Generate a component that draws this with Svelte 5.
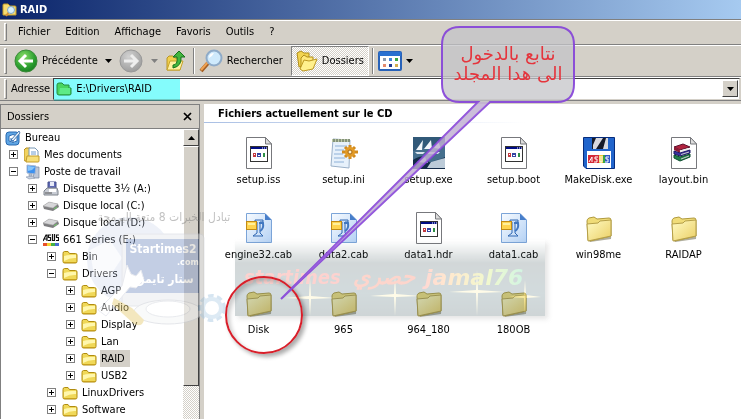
<script lang="ts">
	const menus = ["Fichier", "Edition", "Affichage", "Favoris", "Outils", "?"];

	type TreeNode = { name: string; level: number; icon: string; open?: boolean; };

	const tree: TreeNode[] = [
		{ name: "Mes documents", level: 1, icon: "documents" },
		{ name: "Poste de travail", level: 1, icon: "computer", open: true },
		{ name: "Disquette 3½ (A:)", level: 2, icon: "floppy" },
		{ name: "Disque local (C:)", level: 2, icon: "drive" },
		{ name: "Disque local (D:)", level: 2, icon: "drive" },
		{ name: "661 Series (E:)", level: 2, icon: "asus", open: true },
		{ name: "Bin", level: 3, icon: "folder" },
		{ name: "Drivers", level: 3, icon: "folder", open: true },
		{ name: "AGP", level: 4, icon: "folder" },
		{ name: "Audio", level: 4, icon: "folder" },
		{ name: "Display", level: 4, icon: "folder" },
		{ name: "Lan", level: 4, icon: "folder" },
		{ name: "RAID", level: 4, icon: "folder" },
		{ name: "USB2", level: 4, icon: "folder" },
		{ name: "LinuxDrivers", level: 3, icon: "folder" },
		{ name: "Software", level: 3, icon: "folder" }
	];

	const files = [
		{ name: "setup.iss", icon: "app" },
		{ name: "setup.ini", icon: "ini" },
		{ name: "setup.exe", icon: "installer" },
		{ name: "setup.boot", icon: "app" },
		{ name: "MakeDisk.exe", icon: "disk" },
		{ name: "layout.bin", icon: "rar" },
		{ name: "engine32.cab", icon: "cab" },
		{ name: "data2.cab", icon: "cab" },
		{ name: "data1.hdr", icon: "app" },
		{ name: "data1.cab", icon: "cab" },
		{ name: "win98me", icon: "dir" },
		{ name: "RAIDAP", icon: "dir" },
		{ name: "Disk", icon: "dir" },
		{ name: "965", icon: "dir" },
		{ name: "964_180", icon: "dir" },
		{ name: "180OB", icon: "dir" }
	];

	let selected = $state("RAID");
	let address = $state("E:\\Drivers\\RAID");
	let showFolders = $state(true);
</script>

{#snippet caret()}
	<svg class="caret" width="7" height="4" viewBox="0 0 7 4"><path d="M0 0h7L3.500 4z" fill="currentColor" /></svg>
{/snippet}

{#snippet smallIcon(kind: string)}
	<svg width="16" height="16" viewBox="0 0 16 16">
		{#if kind === "folder"}
			<path d="M1 4.500Q1 2.500 2.500 2.500H6L7.500 4.500H13.500Q15 4.500 15 6V12.500Q15 14 13.500 14H2.500Q1 14 1 12.500z" fill="#f0d858" stroke="#b08c10" />
			<path d="M2 7Q5 5.500 14 6V9Q8 8.500 2 12z" fill="#fff7ad" />
			<path d="M2 13.500H14" stroke="#c9a11d" />
		{:else if kind === "green"}
			<path d="M1 4Q1 2 3 2H6L8 4H13V7H15V13Q15 14 13 14H3Q1 14 1 12z" fill="#8ad860" stroke="#3f9040" />
			<path d="M3 13L4 7H14V13z" fill="#b4ee88" />
		{:else if kind === "search"}
			<path d="M1 3Q1 2 2 2H6L8 4H13Q14 4 14 5V13H1z" fill="#f6dc72" stroke="#c39d28" />
			<path d="M7 10L4 14" stroke="#d99236" stroke-width="2" />
			<circle cx="9" cy="8" r="3.500" fill="#d8f0fc" stroke="#7fa7c4" />
		{:else if kind === "desktop"}
			<rect x="1" y="2" width="13" height="13" rx="3" fill="#5ea5e4" stroke="#2868b0" />
			<path d="M4 6Q8 3 12 6V11Q8 14 4 11z" fill="#fff" stroke="#2868b0" />
			<path d="M6 10L14 1L15 3L8 11z" fill="#e9f2fb" stroke="#285f9f" stroke-width=".8" />
			<path d="M6 8v3h3" fill="none" stroke="#2c70ba" />
		{:else if kind === "documents"}
			<path d="M0 3L2 1H6L7 3V14H1Q0 14 0 12z" fill="#f1d360" stroke="#b48d22" />
			<path d="M5 1H11L14 4V13H5z" fill="#fff" stroke="#7998b5" />
			<path d="M7 5h5M7 7h5" stroke="#6e9ccf" />
			<path d="M3 9H15V14Q15 15 14 15H2z" fill="#f7df79" stroke="#c39d2b" />
		{:else if kind === "computer"}
			<path d="M11 3H15V14H9z" fill="#bfc8d8" stroke="#77849b" stroke-width=".7" />
			<path d="M3 1L12 2L11 10L3 9z" fill="#3d91ef" stroke="#a5b7d2" />
			<path d="M4 2L11 3L8 6L4 7z" fill="#86c5fb" />
			<path d="M5 10h3v2H5zM2 13l6-1 3 2-6 1z" fill="#c6d0df" stroke="#8794aa" stroke-width=".6" />
		{:else if kind === "floppy"}
			<path d="M5 1H13V10H5z" fill="#606ab4" stroke="#454e8c" />
			<path d="M7 1h4v4H7z" fill="#e8ebf7" />
			<path d="M1 10L4 7H14L15 10V14H1z" fill="#c8ccd4" stroke="#7f848c" />
			<path d="M6 8h7v3H6z" fill="#fff" /><path d="M2 12h7" stroke="#555" />
		{:else if kind === "drive"}
			<path d="M0 8L6 4L15 6L16 9L10 13L1 11z" fill="#7e7e80" />
			<path d="M0 8L6 4L15 6L10 10z" fill="#d7d7d9" stroke="#aaa" stroke-width=".5" />
			<path d="M11 11l3-2" stroke="#6fd167" />
		{:else if kind === "asus"}
			<path d="M0 9L3 3H4V9M1 7H4M8 3H5.500V5.500H7.500V8.500H5M9.500 2V8.500H11.500V2M16 3H13.500V5.500H15.500V8.500H13" fill="none" stroke="#111" stroke-width="1.200" />
			<path d="M0 11h4v3H0z" fill="#e8502a" /><path d="M4 11h4v3H4z" fill="#f3d331" /><path d="M8 11h4v3H8z" fill="#45b346" /><path d="M12 11h4v3h-4z" fill="#496ed0" />
		{/if}
	</svg>
{/snippet}

{#snippet fileIcon(kind: string)}
	<svg width="32" height="32" viewBox="0 0 32 32">
		{#if kind === "dir"}
			<path d="M6 28L28 23L29 10L28 27L7 30z" fill="#8d8a72" opacity=".7" />
			<path d="M4 9Q4 7 6 6L11 5L14 7L26 6Q28 6 28 8V24L7 29L5 28z" fill="#f0dc78" stroke="#b09a3d" />
			<path d="M4 12L15 11L17 9L28 8V24L5 29z" fill="url(#dirFill)" stroke="#b59f48" />
		{:else if kind === "app" || kind === "rar"}
			<path d="M3.500 .5H22.500L28.500 7V31.500H3.500z" fill="#fff" stroke="#77787c" />
			<path d="M22.500 .5V7H28.500z" fill="#ddd" stroke="#77787c" />
			{#if kind === "app"}
				<rect x="7.500" y="9.500" width="17" height="15" fill="#fff" stroke="#333" />
				<path d="M8 10h16v2H8z" fill="#000c84" />
				<path d="M19 11h1M21 11h1M23 11h1" stroke="#fff" />
				<path d="M10 16h3v4h-3z" fill="#c2393f" /><path d="M14 16h4v4h-4z" fill="#3443a2" /><path d="M20 16h2v4h-2z" fill="#2d9045" />
				<path d="M11 17.500h1M15 18.500h2" stroke="#fff" />
			{:else}
				<path d="M6 10L15 7L22 10L12 13z" fill="#b2233f" stroke="#5d112c" /><path d="M6 10L12 13V16L6 13z" fill="#8c1a34" /><path d="M12 14.500L21 12" stroke="#eee" stroke-width="2" />
				<path d="M6 14L12 16L22 13V16L12 19L6 17z" fill="#39309e" stroke="#1e1866" /><path d="M13 17.500L21 15" stroke="#ccc" />
				<path d="M6 18L12 20L22 17V20L12 24L6 21z" fill="#22804b" stroke="#0c4b2d" /><path d="M13 22L21 19" stroke="#ccc" />
			{/if}
		{:else if kind === "cab"}
			<path d="M3.500 1.500H22L28.500 8V30.500H3.500z" fill="url(#cabFill)" stroke="#7ba4d8" />
			<path d="M22 1.500V8H28.500z" fill="#477eca" />
			<path d="M12 8H20V10H17V21L20 24H10L14 21V10H12z" fill="#cfe2f8" stroke="#2f66b2" />
			<path d="M16 11H20Q21 17 17 19" fill="none" stroke="#4177c0" stroke-width="2" />
			<rect x="3.500" y="9.500" width="10" height="8" fill="#ffd44e" stroke="#c18b16" />
			<path d="M5 11H12V13H5z" fill="#fff09a" />
		{:else if kind === "ini"}
			<path d="M5 2L22 3L21 31L3 29z" fill="#e7f1fb" stroke="#9bb1c9" />
			<path d="M4 2h18v3H4z" fill="#bdc9a7" /><path d="M6 2v3m3-3v3m3-3v3m3-3v3m3-3v3m3-3v3" stroke="#4c5d4e" />
			<path d="M7 9h12M7 13h9M6 17h9M6 21h11M6 25h10" stroke="#8eb1d8" />
			<g transform="translate(22 15)">
				<path d="M0-7V7M-8 0H8M-5-5L5 5M5-5L-5 5" stroke="#d38b1c" stroke-width="3" />
				<circle r="5" fill="#e29a26" /><circle r="2" fill="#fff0cc" stroke="#a86710" />
			</g>
		{:else if kind === "installer"}
			<path d="M0 0h32v32H0z" fill="#315978" /><path d="M0 14L32 5V20L0 31z" fill="#456f8d" />
			<path d="M3 13L10 3L9 13zM11 12L18 3L19 12zM21 11L25 4L28 12z" fill="#f2f6fa" />
			<path d="M2 15h10l-2 2H4zM14 15h13l-2 2H15z" fill="#dbe6ef" />
			<path d="M0 23Q10 16 14 23T32 20V32H0z" fill="#132b48" /><path d="M4 25L12 20L15 26M18 25L32 21V31H14z" fill="#bccbd8" />
		{:else if kind === "disk"}
			<path d="M.5 .5H31.500V31.500H3L.5 29z" fill="#2165cc" stroke="#062c7c" />
			<path d="M9 1H25V12H9z" fill="#161a28" /><path d="M13 1H20L13 12H10V8zM23 1H25V12H20z" fill="#d8d9df" />
			<path d="M4 14H28V31H4z" fill="#fff" />
			<path d="M5 18H16V26H5z" fill="#d52a37" /><path d="M16 18H20V26H16z" fill="#edc934" /><path d="M20 18H22V26H20z" fill="#39a444" /><path d="M22 18H27V26H22z" fill="#2e58c7" />
			<path d="M6 25L9 20V25M15 20H12V22H14V25H11M17 19V25H19V19M26 20H23V22H25V25H22" fill="none" stroke="#fff" />
		{/if}
	</svg>
{/snippet}

<svg class="defs" width="0" height="0" aria-hidden="true">
	<defs>
		<linearGradient id="dirFill" x1="0" y1="0" x2="1" y2="1"><stop stop-color="#fffbc5" /><stop offset="1" stop-color="#ebcf65" /></linearGradient>
		<linearGradient id="cabFill" x1="0" y1="0" x2="1" y2="1"><stop stop-color="#f7fbff" /><stop offset="1" stop-color="#b4d1f4" /></linearGradient>
		<radialGradient id="backFill" cx=".4" cy=".3" r=".8"><stop stop-color="#8adc68" /><stop offset=".6" stop-color="#2ea131" /><stop offset="1" stop-color="#13761d" /></radialGradient>
		<radialGradient id="nextFill" cx=".4" cy=".3" r=".8"><stop stop-color="#d2d2d2" /><stop offset="1" stop-color="#969696" /></radialGradient>
	</defs>
</svg>

<div class="window">
	<header class="title-bar">
		{@render smallIcon("search")}
		<h1>RAID</h1>
	</header>

	<nav class="bar menu-bar">
		<span class="grip"></span>
		{#each menus as m}
			<button class="menu">{m}</button>
		{/each}
	</nav>

	<div class="bar tool-bar">
		<span class="grip"></span>
		<button class="tool back">
			<svg width="24" height="24" viewBox="0 0 24 24">
				<circle cx="12" cy="12" r="11" fill="url(#backFill)" stroke="#3c8a3a" />
				<path d="M12 6L6 12L12 18M7 12H19" fill="none" stroke="#fff" stroke-width="3" />
			</svg>
			Précédente
		</button>
		<button class="tool drop" aria-label="Historique">{@render caret()}</button>
		<button class="tool next" aria-label="Suivante" disabled>
			<svg width="24" height="24" viewBox="0 0 24 24">
				<circle cx="12" cy="12" r="11" fill="url(#nextFill)" stroke="#999" />
				<path d="M12 6L18 12L12 18M17 12H5" fill="none" stroke="#eee" stroke-width="3" />
			</svg>
			{@render caret()}
		</button>
		<button class="tool" aria-label="Dossier parent">
			<svg width="20" height="22" viewBox="0 0 20 22">
				<path d="M1 8L3 6H7L9 8H14V20H1z" fill="#f1cf4e" stroke="#b89524" />
				<path d="M1 20L4 11H17L14 20z" fill="#fff0a0" stroke="#c7a42d" />
				<path d="M7 15Q12 15 11 7H7L13 1L19 7H15Q16 16 7 18z" fill="#42b63e" stroke="#16721c" />
			</svg>
		</button>
		<span class="sep"></span>
		<button class="tool find">
			<svg width="24" height="24" viewBox="0 0 24 24">
				<path d="M9 14L2 22" stroke="#a35d22" stroke-width="4" /><path d="M9 13L2 21" stroke="#f0a252" stroke-width="2" />
				<circle cx="15" cy="9" r="7.500" fill="#cfeafc" stroke="#8fabc8" stroke-width="2" />
				<path d="M10 9Q10 4 15 4Q13 8 10 9" fill="#fff" />
			</svg>
			Rechercher
		</button>
		<button class="tool folders" class:pressed={showFolders} onclick={() => (showFolders = !showFolders)}>
			<svg width="22" height="22" viewBox="0 0 22 22">
				<path d="M1 3L5 1L8 3L13 3V14L3 17z" fill="#f3d450" stroke="#b08d19" />
				<path d="M5 8L8 5L11 7H17V16L5 19z" fill="#ffe87a" stroke="#b08d19" />
				<path d="M4 19L8 10L13 11L21 9L17 19L7 21z" fill="#fff08d" stroke="#bd9820" />
			</svg>
			Dossiers
		</button>
		<span class="sep"></span>
		<button class="tool view" aria-label="Affichage">
			<svg width="24" height="20" viewBox="0 0 24 20">
				<rect x="1" y="1" width="22" height="18" rx="1" fill="#fff" stroke="#2862b8" stroke-width="2" />
				<path d="M1 1h22v4H1z" fill="#2970d0" />
				<path d="M5 7h3v3H5z" fill="#8c99ac" /><path d="M11 7h3v3h-3z" fill="#4386dc" /><path d="M17 7h3v3h-3z" fill="#3ba845" />
				<path d="M5 13h3v3H5z" fill="#e38a6d" /><path d="M11 13h3v3h-3z" fill="#243c91" /><path d="M17 13h3v3h-3z" fill="#d4ae4f" />
			</svg>
			{@render caret()}
		</button>
	</div>

	<div class="bar address-bar">
		<span class="grip"></span>
		<label for="address">Adresse</label>
		<div class="combo">
			{@render smallIcon("green")}
			<input id="address" type="text" bind:value={address} />
			<button class="classic" aria-label="Ouvrir la liste">{@render caret()}</button>
			<span class="marker"></span>
		</div>
	</div>

	<div class="content">
		<aside>
			<div class="pane-head">
				<h2>Dossiers</h2>
				<button aria-label="Fermer">
					<svg width="9" height="9" viewBox="0 0 9 9"><path d="M1 1L8 8M8 1L1 8" stroke="#000" stroke-width="1.700" /></svg>
				</button>
			</div>
			<div class="pane-body">
				<ul>
					<li class="root">
						{@render smallIcon("desktop")}
						<button class="node">Bureau</button>
					</li>
					{#each tree as node}
						<li style:padding-left="{node.level * 19 - 11}px">
							<svg class="toggle" width="9" height="9" viewBox="0 0 9 9">
								<rect x=".5" y=".5" width="8" height="8" fill="#fff" stroke="#808080" />
								<path d={node.open ? "M2 4.500h5" : "M2 4.500h5M4.500 2v5"} stroke="#000" />
							</svg>
							{@render smallIcon(node.icon)}
							<button class="node" class:selected={selected === node.name} onclick={() => (selected = node.name)}>{node.name}</button>
						</li>
					{/each}
				</ul>
				<div class="scrollbar">
					<button class="classic" aria-label="Monter">
						<svg width="7" height="4" viewBox="0 0 7 4"><path d="M0 4h7L3.500 0z" /></svg>
					</button>
					<div class="thumb"></div>
				</div>
			</div>
		</aside>

		<main>
			<h2>Fichiers actuellement sur le CD</h2>
			<div class="files">
				{#each files as f}
					<button class="file">
						{@render fileIcon(f.icon)}
						<span>{f.name}</span>
					</button>
				{/each}
			</div>
		</main>
	</div>

	<!-- site stamp -->
	<svg class="stamp" width="170" height="140" viewBox="0 0 170 140">
		<circle cx="50" cy="70" r="43" fill="#b3c3e4" opacity=".5" />
		<path d="M10 60L30 50L42 68L30 86L14 86z" fill="#fff" opacity=".7" />
		<rect x="42" y="44" width="82" height="72" rx="4" fill="#e5e7ec" stroke="#c9ccd5" />
		<rect x="46" y="49" width="73" height="54" fill="#7c94c4" />
		<ellipse cx="88" cy="122" rx="34" ry="12" fill="#f3f4f6" stroke="#c3c7cf" />
		<ellipse cx="88" cy="119" rx="22" ry="8" fill="#fff" stroke="#ced2da" />
		<path d="M44 88L47 75L51 84L56 86L61 80L64 90L56 98L50 97L26 126L18 120L42 96z" fill="#fff" stroke="#ced2de" />
		<path d="M34 108L52 118L64 130Q62 138 54 134L32 114z" fill="#e5cc71" />
		<circle cx="132" cy="118" r="11" fill="none" stroke="#a5c6e2" stroke-width="6" stroke-dasharray="5 3" />
		<circle cx="132" cy="118" r="9" fill="none" stroke="#b6d2e8" stroke-width="4" />
		<text class="stamp-top" x="84" y="31">تبادل الخبرات 8 متعة البرمجة</text>
		<text class="stamp-name" x="83" y="63">Startimes2</text>
		<text class="stamp-com" x="108" y="75">.com</text>
		<text class="stamp-ar" x="86" y="93">ستار تايمز</text>
	</svg>

	<div class="banner">
		<svg width="310" height="76" viewBox="0 0 310 76">
			<defs>
				<linearGradient id="rainbow"><stop stop-color="#ff6655" /><stop offset=".3" stop-color="#ffb040" /><stop offset=".65" stop-color="#c9e640" /><stop offset="1" stop-color="#50d890" /></linearGradient>
			</defs>
			<g fill="#fff3a8">
				<path d="M75 38L76 56L100 58L76 59L75 76L74 59L50 58L74 56z" /><path d="M160 36L161 54L185 56L161 57L160 76L159 57L135 56L159 54z" />
				<path d="M242 30L243 50L270 52L243 53L242 76L241 53L214 52L241 50z" /><path d="M290 40L291 55L306 57L291 58L290 76L289 58L274 57L289 55z" />
			</g>
			<text class="narrow" x="9" y="44" fill="#fb4f42">startimes</text>
			<text x="118" y="44" fill="#fb5a38">حصري</text>
			<text x="190" y="45" fill="url(#rainbow)">jamal76</text>
		</svg>
	</div>

	<div class="ring"></div>

	<div class="callout">
		<svg width="300" height="280" viewBox="0 0 300 280">
			<path d="M185 7H282Q299 7 299 25V64Q299 82 282 82H215L6 279L203 82H185Q167 82 167 64V25Q167 7 185 7z" />
			<path class="tail" d="M215 82L6 279L203 82z" />
		</svg>
		<p>نتابع بالدخول<br />الى هدا المجلد</p>
	</div>
</div>

<style>
	:global(body) {
		background: #d4d0c8;
	}

	.window {
		position: relative;
		display: flex;
		flex-direction: column;
		height: 100vh;
		overflow: hidden;
		font-family: Tahoma, "DejaVu Sans Condensed", "DejaVu Sans", sans-serif;
		font-size: 11px;
		line-height: 14px;
		color: #000;
		background: #d4d0c8;
	}

	button {
		padding: 0;
		border: 0;
		background: none;
		font: inherit;
		color: inherit;
		white-space: nowrap;
	}

	svg {
		display: block;
		flex: none;
	}

	h1,
	h2,
	p,
	ul {
		margin: 0;
		padding: 0;
		font-size: inherit;
	}

	.defs {
		position: absolute;
	}

	.title-bar {
		display: flex;
		align-items: center;
		gap: 2px;
		height: 19px;
		padding-left: 2px;
		color: #fff;
		background: linear-gradient(90deg, #0a246a, #a6caf0);
	}

	.bar {
		display: flex;
		align-items: center;
		box-sizing: border-box;
		padding-left: 4px;
		border-top: 1px solid #808080;
		box-shadow: inset 0 1px #fff;
	}

	.grip {
		width: 3px;
		height: 18px;
		box-sizing: border-box;
		border: 1px solid;
		border-color: #fff #808080 #808080 #fff;
	}

	.menu-bar {
		gap: 15px;
		height: 25px;
	}

	.menu-bar .grip {
		margin-right: -4px;
	}

	.tool-bar {
		height: 32px;
	}

	.tool-bar .grip {
		height: 26px;
	}

	.tool {
		display: flex;
		align-items: center;
		gap: 4px;
		height: 30px;
	}

	.back {
		margin-left: 7px;
	}

	.drop {
		margin: 0 7px;
	}

	.next {
		gap: 8px;
		margin-right: 8px;
		color: #808080;
	}

	.sep {
		width: 1px;
		height: 26px;
		margin: 0 5px 0 7px;
		background: #808080;
		box-shadow: 1px 0 #fff;
	}

	.folders {
		box-sizing: border-box;
		margin-left: 8px;
		padding: 0 4px;
		border: 1px solid transparent;
	}

	.folders + .sep {
		margin-left: 3px;
	}

	.pressed {
		border-color: #808080 #fff #fff #808080;
		background: repeating-conic-gradient(#fff 0 25%, #d4d0c8 0 50%) 0 0 / 2px 2px;
	}

	.address-bar {
		gap: 3px;
		height: 24px;
	}

	.address-bar .grip {
		height: 20px;
		margin-right: 1px;
	}

	.combo {
		position: relative;
		display: flex;
		flex: 1;
		align-items: center;
		box-sizing: border-box;
		height: 22px;
		margin-right: 1px;
		padding: 1px 1px 1px 2px;
		border: 1px solid;
		border-color: #404040 #d4d0c8 #d4d0c8 #404040;
		background: #fff;
	}

	.combo input {
		flex: 1;
		min-width: 0;
		margin-left: 4px;
		padding: 0;
		border: 0;
		outline: 0;
		background: transparent;
		font: inherit;
	}

	.marker {
		position: absolute;
		top: 0;
		left: 0;
		width: 126px;
		height: 22px;
		background: #84fcfc;
		mix-blend-mode: multiply;
		pointer-events: none;
	}

	.classic {
		display: flex;
		align-items: center;
		justify-content: center;
		box-sizing: border-box;
		width: 16px;
		height: 17px;
		border: 1px solid;
		border-color: #fff #404040 #404040 #fff;
		background: #d4d0c8;
	}

	.content {
		display: flex;
		flex: 1;
		gap: 4px;
		min-height: 0;
		padding-top: 3px;
		border-top: 1px solid #808080;
	}

	aside {
		display: flex;
		flex-direction: column;
		box-sizing: border-box;
		width: 200px;
		border: solid #808080;
		border-width: 1px 1px 0 1px;
	}

	.pane-head {
		display: flex;
		align-items: center;
		justify-content: space-between;
		box-sizing: border-box;
		height: 24px;
		padding: 0 7px 0 6px;
		border-bottom: 1px solid #808080;
	}

	.pane-head h2 {
		font-weight: normal;
	}

	.pane-body {
		display: flex;
		flex: 1;
		min-height: 0;
		background: #fff;
	}

	ul {
		flex: 1;
		min-width: 0;
		overflow: hidden;
		list-style: none;
	}

	li {
		display: flex;
		align-items: center;
		height: 17px;
	}

	.root {
		padding-left: 4px;
	}

	.toggle {
		margin-right: 6px;
	}

	.node {
		height: 17px;
		margin-left: 3px;
		padding: 0 5px 0 1px;
	}

	.selected {
		background: #d4d0c8;
	}

	.scrollbar {
		display: flex;
		flex-direction: column;
		width: 16px;
		background: repeating-conic-gradient(#fff 0 25%, #d4d0c8 0 50%) 0 0 / 2px 2px;
	}

	.thumb {
		box-sizing: border-box;
		height: 84%;
		max-height: 240px;
		border: 1px solid;
		border-color: #fff #404040 #404040 #fff;
		background: #d4d0c8;
	}

	main {
		flex: 1;
		min-width: 0;
		background: #fff;
	}

	main h2 {
		height: 16px;
		padding: 3px 0 0 14px;
		background: linear-gradient(90deg, #a9bfe4, #fff 60%) bottom / 100% 1px no-repeat;
		white-space: nowrap;
	}

	.files {
		display: grid;
		grid-template-columns: repeat(auto-fill, 85px);
		row-gap: 25px;
		padding: 14px 0 0 12px;
	}

	.file {
		display: flex;
		flex-direction: column;
		align-items: center;
		gap: 4px;
	}

	.stamp {
		position: absolute;
		top: 190px;
		left: 80px;
		opacity: 0.45;
		pointer-events: none;
	}

	.stamp text {
		font-family: "DejaVu Sans Condensed", sans-serif;
		font-weight: bold;
		text-anchor: middle;
		fill: #fff;
	}

	.stamp .stamp-top {
		font-size: 12px;
		font-weight: normal;
		fill: #777;
	}

	.stamp .stamp-name {
		font-size: 12px;
	}

	.stamp .stamp-com {
		font-size: 9px;
	}

	.stamp .stamp-ar {
		font-size: 12px;
	}

	.banner {
		position: absolute;
		top: 240px;
		left: 235px;
		background: linear-gradient(180deg, transparent, #4e6468 30%, #50727a 70%, #405a60);
		box-shadow: 3px 3px 5px #999;
		opacity: 0.25;
		pointer-events: none;
	}

	.banner text {
		font-family: "DejaVu Sans", sans-serif;
		font-size: 22px;
		font-style: italic;
		font-weight: bold;
	}

	.banner .narrow {
		font-family: "DejaVu Sans Condensed", sans-serif;
		font-size: 20px;
	}

	.ring {
		position: absolute;
		top: 276px;
		left: 225px;
		width: 74px;
		height: 74px;
		border: 2px solid #d81f2a;
		border-radius: 50%;
		box-shadow: 3px 3px 4px #0005, inset 3px 3px 4px #0003;
		pointer-events: none;
	}

	.callout {
		position: absolute;
		top: 20px;
		left: 275px;
		pointer-events: none;
	}

	.callout path {
		fill: #c4c4c8;
		fill-opacity: 0.75;
		stroke: #8440d8;
		stroke-opacity: 0.9;
		stroke-width: 2px;
	}

	.callout .tail {
		fill: #b98ae6;
		fill-opacity: 0.3;
		stroke: none;
	}

	.callout p {
		position: absolute;
		top: 24px;
		left: 168px;
		width: 130px;
		font-family: "DejaVu Sans", sans-serif;
		font-size: 18px;
		line-height: 20px;
		direction: rtl;
		text-align: center;
		color: #e5343c;
	}
</style>
